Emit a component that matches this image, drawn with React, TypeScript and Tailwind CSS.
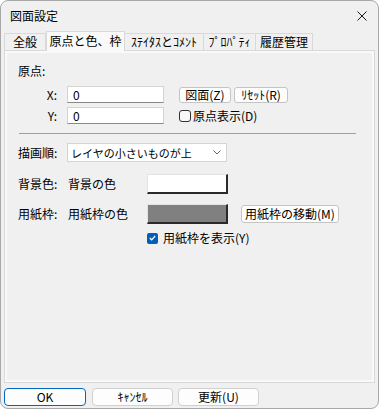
export default function App() {
  const tabs = [
    { label: '全般', w: 'w-[42px]' },
    { label: '原点と色、枠', w: 'w-[79px]', active: true },
    { label: 'ｽﾃｲﾀｽとｺﾒﾝﾄ', w: 'w-[80px]' },
    { label: 'ﾌﾟﾛﾊﾟﾃｨ', w: 'w-[53px]' },
    { label: '履歴管理', w: 'w-[58px]' },
  ];

  return (
    <div className="w-[380px] h-[409px] bg-white font-['Noto_Sans_CJK_JP','Noto_Sans',sans-serif] text-[12px] leading-[16px] text-black">
      <div className="w-[379px] h-[409px] bg-[#f0f0f0] border border-[#a8a8a8] rounded-[8px] flex flex-col overflow-hidden">
        {/* Title bar */}
        <div className="h-[30px] flex items-center justify-between pl-[9px] pr-[10px] shrink-0">
          <span>図面設定</span>
          <svg width="10" height="10" viewBox="0 0 10 10" className="mr-[1px]">
            <path d="M0.5 0.5 L9.5 9.5 M9.5 0.5 L0.5 9.5" stroke="#1a1a1a" strokeWidth="1" fill="none" />
          </svg>
        </div>

        <div className="px-[3px] flex flex-col">
          {/* Tabs */}
          <div className="h-[19px] flex items-end">
            {tabs.map((t) =>
              t.active ? (
                <div
                  key={t.label}
                  className={`${t.w} h-[20px] -mb-px relative z-10 bg-[#f9f9f9] border border-b-0 border-[#d9d9d9] flex items-center justify-center pb-[2px]`}
                >
                  {t.label}
                </div>
              ) : (
                <div
                  key={t.label}
                  className={`${t.w} h-[17px] bg-[#f0f0f0] border border-b-0 border-[#d9d9d9] -ml-px first:ml-0 flex items-center justify-center`}
                >
                  {t.label}
                </div>
              )
            )}
          </div>

          {/* Panel */}
          <div className="w-[371px] h-[333px] border border-[#d9d9d9]">
            <div className="h-full border-2 border-[#f9f9f9] bg-[#f0f0f0] pl-[11px] flex flex-col">
              <div className="mt-[10px] h-[16px]">原点:</div>

              {/* X */}
              <div className="mt-[7px] h-[17px] flex items-center">
                <div className="w-[49px] text-right pr-[10px]">X:</div>
                <div className="w-[97px] h-[17px] bg-white border border-[#d4d4d4] border-b-[#8a8a8a] pl-[5px] flex items-center">0</div>
                <div className="ml-[15px] flex items-center gap-[3px]">
                  <button className="w-[52px] h-[16px] bg-[#fdfdfd] border border-[#c4c4c4] rounded-[3px] flex items-center justify-center">図面(Z)</button>
                  <button className="w-[54px] h-[16px] bg-[#fdfdfd] border border-[#c4c4c4] rounded-[3px] flex items-center justify-center">ﾘｾｯﾄ(R)</button>
                </div>
              </div>

              {/* Y */}
              <div className="mt-[4px] h-[17px] flex items-center">
                <div className="w-[49px] text-right pr-[10px]">Y:</div>
                <div className="w-[97px] h-[17px] bg-white border border-[#d4d4d4] border-b-[#8a8a8a] pl-[5px] flex items-center">0</div>
                <div className="ml-[15px] flex items-center gap-[2px]">
                  <div className="w-[12px] h-[12px] border border-[#333] rounded-[3px] bg-[#f7f7f7]" />
                  <span>原点表示(D)</span>
                </div>
              </div>

              <div className="mt-[9px] w-[337px] h-px bg-[#a0a0a0] ml-[1px]" />

              {/* Draw order */}
              <div className="mt-[9px] h-[19px] flex items-center">
                <div className="w-[49px]">描画順:</div>
                <div className="w-[160px] h-[19px] bg-white border border-[#d4d4d4] flex items-center justify-between pl-[3px] pr-[5px]">
                  <span className="text-[11px]">レイヤの小さいものが上</span>
                  <svg width="8" height="5" viewBox="0 0 8 5">
                    <path d="M0.5 0.5 L4 4 L7.5 0.5" stroke="#666" strokeWidth="1" fill="none" />
                  </svg>
                </div>
              </div>

              {/* Background */}
              <div className="mt-[12px] h-[20px] flex items-center">
                <div className="w-[50px]">背景色:</div>
                <div className="w-[79px]">背景の色</div>
                <div className="w-[81px] h-[20px] bg-white border-t border-l border-[#e3e3e3] border-r-2 border-b-2 border-r-[#2a2a2a] border-b-[#2a2a2a]" />
              </div>

              {/* Paper frame */}
              <div className="mt-[10px] h-[20px] flex items-center">
                <div className="w-[50px]">用紙枠:</div>
                <div className="w-[79px]">用紙枠の色</div>
                <div className="w-[81px] h-[20px] bg-[#808080] border-t border-l border-[#e3e3e3] border-r-2 border-b-2 border-r-[#2a2a2a] border-b-[#2a2a2a]" />
                <button className="ml-[13px] w-[98px] h-[18px] bg-[#fdfdfd] border border-[#c4c4c4] rounded-[3px] flex items-center justify-center">用紙枠の移動(M)</button>
              </div>

              {/* Show frame */}
              <div className="mt-[8px] h-[12px] flex items-center ml-[129px] gap-[5px]">
                <div className="w-[11px] h-[11px] rounded-[2px] bg-[#005fb8] flex items-center justify-center">
                  <svg width="7" height="6" viewBox="0 0 7 6">
                    <path d="M0.8 3 L2.7 4.8 L6.2 1" stroke="#fff" strokeWidth="1.2" fill="none" />
                  </svg>
                </div>
                <span>用紙枠を表示(Y)</span>
              </div>
            </div>
          </div>

          {/* Bottom buttons */}
          <div className="mt-[5px] flex items-center">
            <button className="w-[82px] h-[18px] bg-[#fdfdfd] border border-[#0067c0] rounded-[4px] flex items-center justify-center">OK</button>
            <button className="ml-[6px] w-[81px] h-[18px] bg-[#fdfdfd] border border-[#d0d0d0] rounded-[4px] flex items-center justify-center">ｷｬﾝｾﾙ</button>
            <button className="ml-[5px] w-[81px] h-[18px] bg-[#fdfdfd] border border-[#d0d0d0] rounded-[4px] flex items-center justify-center">更新(U)</button>
          </div>
        </div>
      </div>
    </div>
  );
}
